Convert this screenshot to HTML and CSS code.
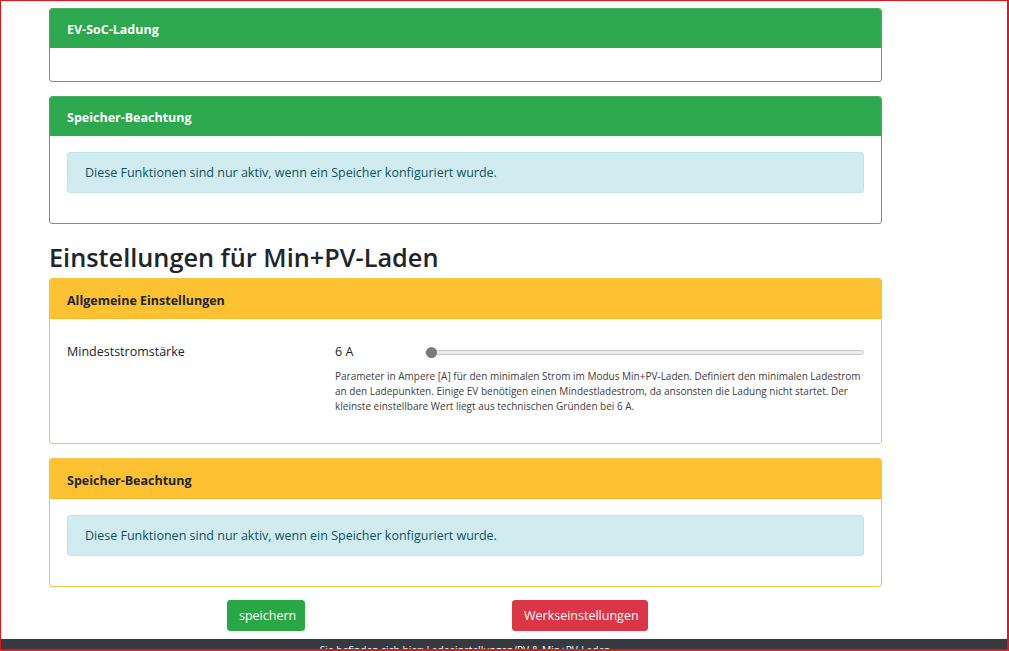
FILE: index.html
```html
<!DOCTYPE html>
<html lang="de">
<head>
<meta charset="utf-8">
<title>Ladeeinstellungen</title>
<link rel="stylesheet" href="styles.css">
</head>
<body>
<div class="frame"></div>
<main class="container">
  <section class="card card-green">
    <div class="card-header">EV-SoC-Ladung</div>
    <div class="card-body"></div>
  </section>
  <section class="card card-green">
    <div class="card-header">Speicher-Beachtung</div>
    <div class="card-body">
      <div class="alert">Diese Funktionen sind nur aktiv, wenn ein Speicher konfiguriert wurde.</div>
    </div>
  </section>

  <h2 class="section-title">Einstellungen für Min+PV-Laden</h2>

  <section class="card card-yellow">
    <div class="card-header">Allgemeine Einstellungen</div>
    <div class="card-body">
      <div class="form-row">
        <label class="form-label" for="minamp">Mindeststromstärke</label>
        <div class="form-field">
          <div class="slider-line">
            <span class="slider-value">6 A</span>
            <input id="minamp" class="slider" type="range" min="6" max="32" value="6">
          </div>
          <p class="help">Parameter in Ampere [A] für den minimalen Strom im Modus Min+PV-Laden. Definiert den minimalen Ladestrom an den Ladepunkten. Einige EV benötigen einen Mindestladestrom, da ansonsten die Ladung nicht startet. Der kleinste einstellbare Wert liegt aus technischen Gründen bei 6 A.</p>
        </div>
      </div>
    </div>
  </section>
  <section class="card card-yellow card-last">
    <div class="card-header">Speicher-Beachtung</div>
    <div class="card-body">
      <div class="alert">Diese Funktionen sind nur aktiv, wenn ein Speicher konfiguriert wurde.</div>
    </div>
  </section>

  <div class="actions">
    <button class="btn btn-success" type="button">speichern</button>
    <button class="btn btn-danger" type="button">Werkseinstellungen</button>
  </div>
</main>
<footer class="footer">
  <div class="footer-text">Sie befinden sich hier: Ladeeinstellungen/PV &amp; Min+PV-Laden</div>
</footer>
</body>
</html>
```

FILE: styles.css
```css
* { box-sizing: border-box; }

html, body {
  margin: 0;
  padding: 0;
}

body {
  font-family: "Open Sans", "Noto Sans", sans-serif;
  font-size: 12.5px;
  line-height: 20px;
  color: #212529;
  background: #fff;
}

.frame {
  position: fixed;
  top: 0;
  left: 0;
  width: 1009px;
  height: 651px;
  border-top: 1px solid #e8141b;
  border-left: 1px solid #e8141b;
  border-right: 2px solid #e8141b;
  border-bottom: 2px solid #e8141b;
  pointer-events: none;
  z-index: 10;
}

.container {
  width: 833px;
  margin-left: 49px;
  padding-top: 8px;
}

.card {
  border-radius: 3px;
  margin-bottom: 14px;
  overflow: hidden;
}

.card-last {
  margin-bottom: 13px;
}

.card-green { border: 1px solid #4daf65; }
.card-yellow { border: 1px solid #f6c344; }

.card-header {
  height: 40px;
  line-height: 20px;
  padding: 12px 17px 8px;
  font-weight: 700;
}

.card-green .card-header {
  background: #2ea84f;
  color: #fff;
  height: 39px;
  padding-top: 11px;
}

.card-yellow .card-header {
  background: #fdc132;
  color: #212529;
  border-bottom: 1px solid #f2b92c;
}

.card-body {
  padding: 16px 17px;
  min-height: 33px;
}

.alert {
  background: #d1ecf1;
  border: 1px solid #bee5eb;
  border-radius: 3px;
  color: #0c5460;
  padding: 10px 17px 9px;
  margin-bottom: 14px;
}

.section-title {
  font-size: 25.3px;
  font-weight: 600;
  line-height: 32px;
  margin: 17px 0 5px;
  color: #212529;
}

.form-row {
  display: grid;
  grid-template-columns: 268px 1fr;
  padding-top: 7px;
  padding-bottom: 13px;
}

.form-label {
  line-height: 20px;
}

.slider-line {
  display: flex;
  align-items: center;
  height: 20px;
}

.slider-value {
  width: 90px;
  flex: none;
}

.slider {
  -webkit-appearance: none;
  appearance: none;
  flex: 1;
  margin: 0;
  height: 11px;
  background: transparent;
}

.slider::-webkit-slider-runnable-track {
  height: 5px;
  background: #ececec;
  border: 1px solid #c9c9c9;
  border-radius: 3px;
}

.slider::-webkit-slider-thumb {
  -webkit-appearance: none;
  appearance: none;
  width: 11px;
  height: 11px;
  border-radius: 50%;
  background: #7a7a7a;
  margin-top: -4px;
  border: none;
}

.help {
  margin: 7px 0 0;
  font-size: 10px;
  line-height: 15px;
  color: #3d3d3d;
}

.actions {
  display: flex;
  padding-left: 178px;
  margin-bottom: 8px;
}

.btn {
  font-family: inherit;
  font-size: 12.5px;
  line-height: 19px;
  height: 31px;
  padding: 5px 11px;
  border: 1px solid transparent;
  border-radius: 3px;
  color: #fff;
  cursor: pointer;
}

.btn-success {
  background: #28a745;
  border-color: #28a745;
  width: 78px;
  margin-right: 207px;
}

.btn-danger {
  background: #dc3545;
  border-color: #dc3545;
  width: 136px;
}

.footer {
  background: #343a40;
  height: 40px;
  color: #fff;
}

.footer-text {
  width: 930px;
  text-align: center;
  font-size: 10.2px;
  line-height: 14px;
  padding-top: 4px;
}
```
